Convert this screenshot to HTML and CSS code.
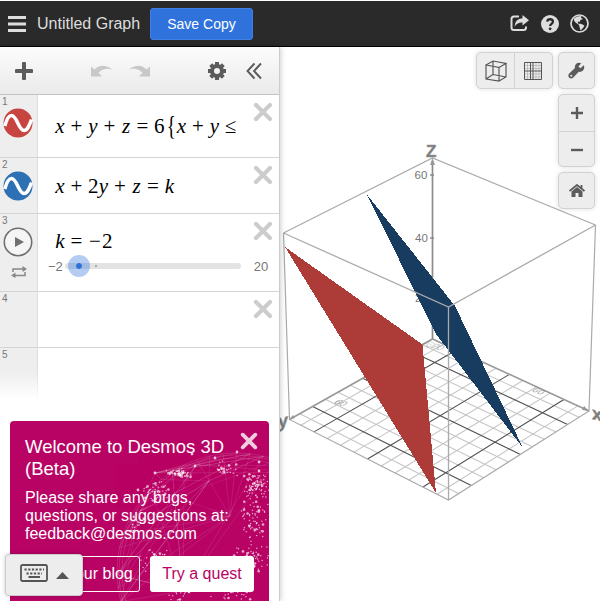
FILE: index.html
```html
<!DOCTYPE html>
<html lang="en">
<head>
<meta charset="utf-8">
<title>Untitled Graph</title>
<link rel="stylesheet" href="styles.css">
</head>
<body>
<svg class="defs" width="0" height="0">
  <symbol id="cross" viewBox="0 0 20 20"><path d="M3 3L17 17M17 3L3 17" fill="none" stroke="currentColor" stroke-width="4.2" stroke-linecap="round"/></symbol>
  <symbol id="wave" viewBox="0 0 30 30"><circle cx="15" cy="15" r="14.5" fill="currentColor"/><path d="M1.8 18C4 10 6 7.500 8.500 7.500C14 7.500 15.500 22.500 21 22.500C24.500 22.500 26.500 17 28.500 11.500" fill="none" stroke="#fff" stroke-width="3.500"/></symbol>
</svg>
<div class="app">
  <header class="header">
    <svg class="menu" width="18" height="16"><path d="M0 1.500H18M0 8H18M0 14.500H18" stroke="#ddd" stroke-width="2.800"/></svg>
    <span class="title">Untitled Graph</span>
    <button class="save">Save Copy</button>
    <div class="account">
      <svg width="19" height="19" viewBox="0 0 19 19"><path d="M9 2.500H4Q1.500 2.500 1.500 5V13.500Q1.500 16 4 16H13.500Q16 16 16 13.500V12.500" fill="none" stroke="#ddd" stroke-width="2"/><path d="M12.500 1L19 6.300L12.500 11.500V8.500Q7.500 8.200 4.500 12.700Q5 4.500 12.500 4.200Z" fill="#ddd"/></svg>
      <svg width="18" height="18" viewBox="0 0 18 18"><circle cx="9" cy="9" r="9" fill="#ddd"/><path d="M6.200 6.700C6.500 3.400 11.900 3.500 11.900 6.700C11.900 8.800 9.100 8.800 9.100 11" fill="none" stroke="#2a2a2a" stroke-width="2.300"/><circle cx="9.100" cy="13.800" r="1.400" fill="#2a2a2a"/></svg>
      <svg width="19" height="19" viewBox="0 0 19 19"><circle cx="9.500" cy="9.500" r="8.500" fill="none" stroke="#ddd" stroke-width="1.700"/><path d="M4 4.500L7 2.500L11.500 2L11 4L13 5L10.500 6L9.500 8L7.800 7.500L8 9.500L10 10L8.800 10.800L5.500 8.500L4 6.500ZM8.800 10L11 9.800L14.500 11.500L13 14L10.500 16.500L9.500 13Z" fill="#ddd"/></svg>
    </div>
  </header>
  <div class="workspace">
    <aside class="panel">
      <div class="toolbar">
        <svg width="18" height="18"><path d="M9 1.500V16.500M1.500 9H16.500" stroke="#5b5b5b" stroke-width="4" stroke-linecap="round"/></svg>
        <svg class="undo" width="21" height="12" viewBox="0 0 21 12"><path id="undo-shape" d="M0 1.500L3.500 4.500Q11-3 21 4.500Q13 2.200 7.500 7.800L11 11.500H0Z" fill="#c8c8c8"/></svg>
        <svg class="redo" width="21" height="12" viewBox="0 0 21 12"><path d="M21 1.500L17.500 4.500Q10-3 0 4.500Q8 2.200 13.500 7.800L10 11.500H21Z" fill="#c8c8c8"/></svg>
        <svg class="gear" width="18" height="18" viewBox="-9 -9 18 18"><circle r="5" fill="none" stroke="#5b5b5b" stroke-width="4"/><path d="M0-9V-6M0 6V9M-9 0H-6M6 0H9M-6.300-6.300L-4.500-4.500M6.300-6.300L4.500-4.500M-6.300 6.300L-4.500 4.500M6.300 6.300L4.500 4.500" stroke="#5b5b5b" stroke-width="4"/></svg>
        <svg class="collapse" width="17" height="18"><path d="M8.500 1.500L1.500 9L8.500 16.500M15 1.500L8 9L15 16.500" fill="none" stroke="#5b5b5b" stroke-width="1.900"/></svg>
      </div>
      <div class="row row-one">
        <div class="tab"><span>1</span><svg class="wave red"><use href="#wave"/></svg></div>
        <div class="math"><i>x</i><b>+</b><i>y</i><b>+</b><i>z</i><b>=</b><span>6</span><em>{</em><i>x</i><b>+</b><i>y</i><b class="leq">≤</b></div>
        <svg class="close"><use href="#cross"/></svg>
      </div>
      <div class="row row-two">
        <div class="tab"><span>2</span><svg class="wave blue"><use href="#wave"/></svg></div>
        <div class="math"><i>x</i><b>+</b><span>2</span><i>y</i><b>+</b><i>z</i><b>=</b><i>k</i></div>
        <svg class="close"><use href="#cross"/></svg>
      </div>
      <div class="row row-three">
        <div class="tab"><span>3</span><svg class="wave" viewBox="0 0 30 30"><circle cx="15" cy="15" r="13.700" fill="#f5f5f5" stroke="#707070" stroke-width="1.600"/><path d="M12 10L21 15L12 20Z" fill="#707070"/></svg>
          <svg class="loop" width="16" height="12"><path d="M2 6V3H13M14 6V9.500H2" fill="none" stroke="#888" stroke-width="1.500"/><path d="M11.500 0L16 3L11.500 6ZM4.500 6.500L0 9.500L4.500 12Z" fill="#888"/></svg></div>
        <div class="body">
          <div class="math"><i>k</i><b>=</b><b class="minus">−</b><span>2</span></div>
          <div class="slider"><span>−2</span><div class="track"><div class="thumb"></div><div class="zero"></div></div><span class="upper">20</span></div>
        </div>
        <svg class="close"><use href="#cross"/></svg>
      </div>
      <div class="row row-four"><div class="tab"><span>4</span></div><svg class="close"><use href="#cross"/></svg></div>
      <div class="row row-five"><div class="tab"><span>5</span></div></div>
      <section class="welcome">
        <svg id="globe" class="globe" width="259" height="180"></svg>
        <div class="welcome-copy">
          <svg class="dismiss"><use href="#cross"/></svg>
          <h2>Welcome to Desmos 3D<br>(Beta)</h2>
          <p>Please share any bugs,<br>questions, or suggestions at:<br>feedback@desmos.com</p>
          <div class="actions"><button class="blog">Read our blog</button><button class="quest">Try a quest</button></div>
        </div>
      </section>
      <div class="keypad">
        <svg width="28" height="18"><rect x="1" y="1" width="26" height="16" rx="1.500" fill="none" stroke="#555" stroke-width="1.800"/><path d="M4.500 5.500H24M6.500 9.500H22" stroke="#555" stroke-width="2" stroke-dasharray="2.200 1.500"/><path d="M8.500 13H20" stroke="#555" stroke-width="2"/></svg>
        <svg width="13" height="7"><path d="M0 7L6.500 0L13 7Z" fill="#555"/></svg>
      </div>
    </aside>
    <main class="graph">
      <svg id="scene" class="scene" width="320" height="554" viewBox="280 47 320 554"></svg>
      <div class="controls">
        <div class="group views">
          <div class="cell"><svg width="22" height="22"><path d="M1 5L14 7.500V21L1 19ZM1 5L8 1L21 3.500L14 7.500M21 3.500V17L14 21M8 1V14.500L1 19M8 14.500L21 17" fill="none" stroke="#555" stroke-width="1.150"/></svg></div>
          <div class="cell"><svg width="18" height="18"><path d="M3.500 0V18M6.500 0V18M12 0V18M15 0V18M0 3.500H18M0 6.500H18M0 12H18M0 15H18" stroke="#aaa" stroke-width=".6"/><path d="M.5.500H17.500V17.500H.5ZM9 0V18M0 9H18M6.500 0V18" fill="none" stroke="#555" stroke-width="1"/></svg></div>
        </div>
        <div class="side">
          <div class="group cell"><svg width="17" height="17"><path d="M15.800 3.200L12.500 6.300L10.400 4.500L13.300 1.200C9.500-.5 6.300 2.200 6.900 6L1 11.800C-1.200 15 2.600 18 5.300 15.500L10.800 9.800C14.700 10.500 17.300 6.500 15.800 3.200Z" fill="#5b5b5b"/><circle cx="3.300" cy="13.700" r="1" fill="#ededed"/></svg></div>
          <div class="group zoom"><div class="cell"><svg width="12" height="12"><path d="M6 0V12M0 6H12" stroke="#5b5b5b" stroke-width="2.400"/></svg></div><div class="cell"><svg width="12" height="12"><path d="M0 6H12" stroke="#5b5b5b" stroke-width="2.400"/></svg></div></div>
          <div class="group cell"><svg width="16" height="14"><path d="M.5 7L8 1L15.500 7M12.500 1V5" fill="none" stroke="#5b5b5b" stroke-width="1.800"/><path d="M2.500 7.500L8 3L13.500 7.500V13H9.500V9H6.500V13H2.500Z" fill="#5b5b5b"/></svg></div>
        </div>
      </div>
    </main>
  </div>
</div>
<script src="graph.js"></script>
</body>
</html>
```
FILE: styles.css
```css
* { box-sizing: border-box; }
body { margin: 0; font-family: "Liberation Sans", Arial, sans-serif; background: #fff; overflow: hidden; }
svg { display: block; flex: none; }
button { font: inherit; }
.defs { position: absolute; }
.app { width: 600px; height: 601px; padding-top: 1px; display: flex; flex-direction: column; overflow: hidden; }
.header { height: 46px; flex: none; background: #2a2a2a; border-bottom: 1px solid #000; display: flex; align-items: center; padding: 0 11px 0 8px; }
.title { color: #ddd; font-size: 16px; margin-left: 11px; width: 103px; white-space: nowrap; }
.save { width: 103px; height: 32px; margin-left: 10px; padding: 1px 0 0; background: #2f72dc; border: 1px solid #4080e4; border-radius: 3px; color: #fff; font-size: 14px; }
.account { margin-left: auto; display: flex; gap: 11.500px; align-items: center; }
.workspace { display: flex; height: 554px; }
.panel { width: 280px; flex: none; position: relative; z-index: 1; background: #fff; border-right: 1px solid #ccc; box-shadow: 0 0 6px rgba(0,0,0,.25); }
.toolbar { height: 48px; display: flex; align-items: center; padding-left: 15px; background: linear-gradient(#fcfcfc, #eaeaea); border-bottom: 1px solid #c4c4c4; }
.undo { margin-left: 58px; }
.redo { margin-left: 17px; }
.gear { margin-left: 58px; }
.collapse { margin-left: 20px; }
.row { display: flex; position: relative; border-bottom: 1px solid #d4d4d4; }
.row-one { height: 63px; }
.row-two { height: 56px; }
.row-three { height: 78px; }
.row-four { height: 56px; }
.row-five { height: 54px; border: 0; }
.tab { width: 38px; flex: none; background: #eee; border-right: 1px solid #ddd; color: #777; font-size: 10px; line-height: 12px; padding-left: 2px; padding-top: 1px; }
.row-five .tab { background: linear-gradient(#eee 45%, #fff 95%); border-image: linear-gradient(#ddd 40%, #fff) 1; }
.wave { width: 30px; height: 30px; margin: 0 0 0 1px; }
.red { color: #c74440; }
.blue { color: #2d70b3; }
.loop { margin: 9px 0 0 9px; }
.math { display: flex; align-items: center; padding-left: 17px; font: 21px/30px "Liberation Serif", serif; color: #000; }
.row-one .math { height: 61px; }
.math i { width: 10px; text-align: center; }
.math b { font-weight: 400; width: 23px; text-align: center; }
.math em { font: 27px/30px "Liberation Serif", serif; transform: scaleX(.7); width: 12px; text-align: center; }
.math .leq { width: 22px; }
.math .minus { width: 14px; }
.close { width: 20px; height: 20px; color: #ccc; position: absolute; right: 6px; top: 7px; }
.body { flex: 1; padding-top: 12px; }
.slider { display: flex; align-items: center; height: 18px; font-size: 13px; color: #777; padding-left: 10px; margin-top: 1px; }
.track { width: 176px; height: 6px; margin-left: 2px; border-radius: 3px; background: #e3e3e3; display: flex; align-items: center; }
.thumb { width: 22px; height: 22px; margin-left: 3px; flex: none; border-radius: 50%; background: radial-gradient(circle, #2f72dc 0 2.500px, rgba(47,114,220,.36) 3.300px); }
.zero { width: 2px; height: 2px; margin-left: 5px; background: #aaa; }
.upper { margin-left: 13px; }
.welcome { position: absolute; left: 10px; top: 374px; width: 259px; height: 180px; border-radius: 4px 4px 0 0; background: #b80365; overflow: hidden; color: #fff; }
.globe { position: absolute; left: 0; top: 0; }
.welcome-copy { position: relative; padding: 15px 15px 0; }
.dismiss { position: absolute; right: 11px; top: 11px; width: 18px; height: 18px; opacity: .8; }
h2 { font-size: 18.500px; line-height: 22px; font-weight: 400; margin: 0; }
p { font-size: 16px; line-height: 18px; margin: 9px 0 13px; white-space: nowrap; }
.actions { display: flex; gap: 10px; }
.actions button { height: 36px; border-radius: 3px; font-size: 16px; padding: 0 6px; white-space: nowrap; }
.blog { width: 115px; color: #fff; background: transparent; border: 1px solid #fff; }
.quest { width: 104px; flex: none; background: #fff; border: 0; color: #b80365; }
.keypad { position: absolute; left: 5px; top: 507px; width: 78px; height: 42px; border: 1px solid #ccc; border-radius: 4px; background: #ededed; box-shadow: 0 0 4px rgba(0,0,0,.2); display: flex; align-items: center; gap: 8px; padding-left: 14px; padding-bottom: 4px; }
.keypad svg + svg { margin-top: 5px; }
.graph { width: 320px; position: relative; overflow: hidden; }
.controls { position: absolute; top: 5px; right: 5px; display: flex; align-items: flex-start; gap: 5px; }
.group { background: #ededed; border: 1px solid #d2d2d2; border-radius: 5px; box-shadow: 0 0 5px rgba(0,0,0,.13); }
.cell { width: 37px; height: 37px; display: flex; align-items: center; justify-content: center; }
.views { width: 77px; display: flex; height: 37px; }
.views .cell { height: 35px; }
.views .cell + .cell { border-left: 1px solid #d2d2d2; }
.side { display: flex; flex-direction: column; gap: 5px; }
.zoom { width: 37px; height: 73px; }
.zoom .cell { width: 35px; height: 36px; }
.zoom .cell + .cell { border-top: 1px solid #d2d2d2; }
.scene text { font-family: "Liberation Sans", sans-serif; fill: #777; }
.axis-name { font-weight: 700; stroke: #999; stroke-width: .6px; }
```
FILE: graph.js
```js
const NS = "http://www.w3.org/2000/svg";

function add(parent, tag, attrs, text) {
  const node = document.createElementNS(NS, tag);
  for (const key in attrs) node.setAttribute(key, attrs[key]);
  if (text) node.textContent = text;
  parent.appendChild(node);
  return node;
}

// Perspective projection of the floor, u along the x axis and v along the y axis.
function floor(u, v) {
  const g = -0.0452, h = -0.0556;
  const w = g * u + h * v + 1;
  const x = (589 * (1 + g) - 432.5) * u + (289.5 * (1 + h) - 432.5) * v + 432.5;
  const y = (411 * (1 + g) - 339) * u + (419.5 * (1 + h) - 339) * v + 339;
  return (x / w).toFixed(2) + " " + (y / w).toFixed(2);
}

const scene = document.getElementById("scene");
function path(d, stroke, width) {
  add(scene, "path", { d, fill: "none", stroke, "stroke-width": width });
}

for (const dark of [false, true]) {
  for (let k = 0; k < 11; k++) {
    if ((k % 4 === 1) !== dark) continue;
    const t = 0.503 + (k - 5) * 0.0857;
    const color = dark ? "#505050" : "#c6c6c6";
    path(`M${floor(t, 0)}L${floor(t, 1)}M${floor(0, t)}L${floor(1, t)}`, color, 1.1);
  }
}
path("M283.500 233L432.500 158L595.500 225M283.500 233L289.500 419.500L448.500 500L589 411L595.500 225", "#aaa", 1.2);
path("M289.500 419.500L432.500 339L589 411", "#999", 1.6);
path("M432.500 339V161M430 175H434M430 238H434M430 300H434", "#8c8c8c", 1.7);
add(scene, "path", { d: "M432.500 158L435 165H430ZM589 411L582 410L584 406ZM289.500 419.500L293 415L295 418Z", fill: "#999" });
const labels = [["60", 414.5, 179, ""], ["40", 415, 242, ""], ["20", 415, 302, ""]];
for (const [label, x, y] of labels) add(scene, "text", { x, y, "font-size": 11.5 }, label);
add(scene, "text", { transform: "matrix(.8 .28 -.8 .5 333 403)", "font-size": 11, opacity: 0.65 }, "60");
add(scene, "text", { transform: "matrix(.8 .32 -.7 .5 531 391)", "font-size": 11, opacity: 0.65 }, "60");
add(scene, "text", { transform: "matrix(.8 .3 -.8 .5 430 347)", "font-size": 11, opacity: 0.5 }, "20");
add(scene, "text", { transform: "matrix(.8 -.3 .8 .5 427 348)", "font-size": 11, opacity: 0.4 }, "20");
add(scene, "text", { x: 426, y: 157, "font-size": 17, class: "axis-name" }, "Z");
add(scene, "text", { transform: "translate(592 419) skewY(14)", "font-size": 18, class: "axis-name" }, "x");
add(scene, "text", { transform: "translate(278 428) skewY(-12)", "font-size": 18, class: "axis-name" }, "y");
add(scene, "path", { d: "M366.500 194L455 306L523 448L436 334Z", fill: "#183b60", "shape-rendering": "crispEdges" });
add(scene, "path", { d: "M285 247L422.500 344.500L436 493Z", fill: "#ad3b38", "shape-rendering": "crispEdges" });
path("M283.500 233L448.500 307L595.500 225M448.500 307V500", "#aaa", 1.3);

// Network globe behind the welcome message.
const globe = document.getElementById("globe");
let seed = 17;
function random() {
  seed = (seed * 16807) % 2147483647;
  return seed / 2147483647;
}
const cx = 226, cy = 151, radius = 119;
const rim = [];
for (let i = 0; i < 22; i++) {
  const a = Math.PI * (0.92 + i / 22 * 0.8);
  rim.push([cx + radius * Math.cos(a), cy + radius * Math.sin(a)]);
}
const hubs = [[130, 90], [173, 170], [186, 44], [145, 52], [220, 95], [199, 60]];
for (const [x, y] of hubs) {
  for (let i = 0; i < 10; i++) {
    const [rx, ry] = rim[Math.floor(random() * rim.length)];
    add(globe, "path", { d: `M${x} ${y}L${rx} ${ry}`, stroke: "#fff", "stroke-width": 0.6, opacity: 0.16 });
  }
}
for (const r of [119, 117, 114]) add(globe, "circle", { cx, cy, r, fill: "none", stroke: "#fff", "stroke-width": 0.8, opacity: 0.16 });
const clusters = [[169, 52, 13, 5, 60], [146, 70, 16, 12, 50], [213, 48, 17, 8, 30], [247, 65, 15, 15, 90], [242, 99, 19, 24, 65], [243, 136, 24, 16, 70], [126, 104, 12, 17, 18], [145, 139, 17, 15, 45], [218, 164, 36, 18, 65], [170, 171, 12, 10, 30]];
for (const [x, y, w, h, count] of clusters) {
  for (let i = 0; i < count; i++) {
    add(globe, "circle", { cx: x + (random() + random() - 1) * w, cy: y + (random() + random() - 1) * h, r: random() < 0.12 ? 1.3 : 0.75, fill: "#fff", opacity: 0.65 });
  }
}
for (const [x, y] of [[182, 33], [205, 37], [227, 31], [249, 41], [249, 50], [145, 52], [185, 45], [128, 69]]) add(globe, "circle", { cx: x, cy: y, r: 1.4, fill: "#fff", opacity: 0.75 });
```
